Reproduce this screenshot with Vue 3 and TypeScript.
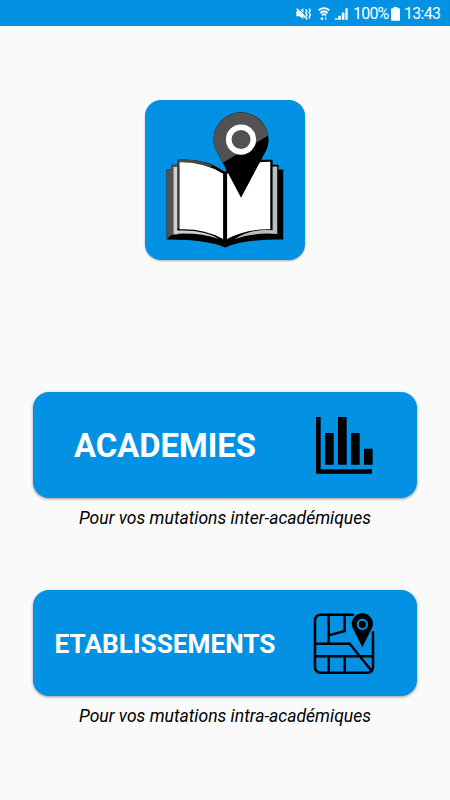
<script setup lang="ts">
type Entry = {
  id: 'chart' | 'map'
  title: string
  caption: string
}

const entries: Entry[] = [
  { id: 'chart', title: 'ACADEMIES', caption: 'Pour vos mutations inter-académiques' },
  { id: 'map', title: 'ETABLISSEMENTS', caption: 'Pour vos mutations intra-académiques' },
]
</script>

<template>
  <div class="screen">
    <header class="status">
      <svg class="mute" viewBox="0 0 45 42" aria-hidden="true">
        <path d="M1 13h9L22 4v32L10 28H1z" fill="#fff" />
        <path d="M5 2L38 35" stroke="#0392e3" stroke-width="3" />
        <path d="M2 5L34 37" stroke="#fff" stroke-width="4.5" />
        <path d="M29 7l4 5-4 6 4 6-4 5M40 5l3 6-4 6 4 7-4 6 3 4" fill="none" stroke="#fff" stroke-width="4" />
      </svg>
      <svg class="wifi" viewBox="0 0 36 42" aria-hidden="true">
        <path d="M2 10Q18-3 34 10M7 18Q18 7 29 18M12 25Q18 18 24 25" fill="none" stroke="#fff" stroke-width="5.5" />
        <path d="M12 30l5 5-5 5-5-5z" fill="#fff" />
        <path d="M23 29v10" stroke="#b5def7" stroke-width="4" />
      </svg>
      <svg class="signal" viewBox="0 0 40 42" aria-hidden="true">
        <path d="M0 34h8v5H0zM10 26h8v13h-8zM21 16h8v23h-8zM32 3h7v36h-7z" fill="#fff" />
      </svg>
      <span class="percent">100%</span>
      <svg class="battery" viewBox="0 0 27 42" aria-hidden="true">
        <path d="M8 0h11v4h6q2 0 2 2v32q0 3-3 3H3q-3 0-3-3V6q0-2 2-2h6z" fill="#fff" />
      </svg>
      <span class="clock">13:43</span>
    </header>

    <main class="content">
      <div class="logo">
        <svg viewBox="28 28 483 483" aria-hidden="true">
          <path d="M93 237h14v-14h18v-15q85-6 143 36h8v227h-9q-60-24-174-23z" fill="#000" />
          <path d="M93 237h14v-14h18v-15q30-2 58 4v16h-56v206h-20L93 448z" fill="#525252" />
          <path d="M114 230h11v190q76-7 125 26-58-20-136-15z" fill="#d0d0d0" />
          <path d="M125 208q55-4 103 15v8q-50-20-103-17z" fill="#484848" />
          <path d="M268 244q50-36 110-36h34v15h18v14h14v211q-114-1-175 23z" fill="#000" />
          <path d="M426 228h-14v192q-67-5-113 26 55-20 127-15z" fill="#bdbdbd" />
          <path d="M129 215V418" stroke="#383838" stroke-width="6" />
          <path d="M126 418q80-4 139 30" fill="none" stroke="#000" stroke-width="6" />
          <path d="M132 215q77-1 131 35v196q-58-32-131-29z" fill="#fff" />
          <path d="M275 250q58-36 130-36v203q-72-2-130 29z" fill="#fff" />
          <path d="M317 322L249 193Q234 171 234 147a83 82 0 0 1 166 0q0 24-15 47z" fill="#000" />
          <path d="M262 217L249 193Q234 171 234 147a83 82 0 0 1 165-12z" fill="#525252" />
          <circle cx="317" cy="147" r="37" fill="#525252" stroke="#fff" stroke-width="17" />
        </svg>
      </div>

      <nav class="menu">
        <section v-for="entry in entries" :key="entry.id" class="entry">
          <button type="button" class="card">
            <span class="title" :class="entry.id">{{ entry.title }}</span>
            <svg v-if="entry.id === 'chart'" class="icon" viewBox="0 0 270 258" aria-hidden="true">
              <path
                d="M48 45h14v157h154v13H48zM75 93h26v95H75zM114 45h26v143h-26zM153 93h26v95h-26zM192 140h26v48h-26z"
                fill="#000"
              />
            </svg>
            <svg v-else class="icon" viewBox="0 0 270 258" aria-hidden="true">
              <g fill="none" stroke="#000" stroke-width="7.5">
                <path d="M162 44H63Q45 44 45 62V200q0 18 18 18H201q18 0 18-18V94" />
                <path d="M86 44V130M134 44V93L86 106M45 131H149L215 213M45 169H179M86 169v49M134 169v49M180 169h39" />
              </g>
              <path
                fill-rule="evenodd"
                d="M187 142L163 94Q155 82 155 72a32 32 0 0 1 64 0q0 10-8 22zM187 56a17 17 0 1 0 .1 0z"
                fill="#000"
              />
              <circle cx="187" cy="73" r="11" fill="#000" />
            </svg>
          </button>
          <p class="caption">{{ entry.caption }}</p>
        </section>
      </nav>
    </main>
  </div>
</template>

<style>
body {
  margin: 0;
  background: #fafafa;
}
</style>

<style scoped>
.screen {
  width: 450px;
  height: 800px;
  overflow: hidden;
  background: #fafafa;
  color: #000;
  font-family: Roboto, "Liberation Sans", sans-serif;
}

.status {
  display: flex;
  align-items: center;
  justify-content: flex-end;
  box-sizing: border-box;
  height: 26px;
  padding: 2px 9px 0 0;
  background: #0392e3;
  color: #fff;
  font-size: 16px;
  line-height: 24px;
}

.status svg {
  display: block;
  height: 14px;
}

.mute {
  width: 15px;
  margin-right: 7px;
}

.wifi {
  width: 12px;
  margin-right: 5px;
}

.signal {
  width: 13px;
  margin-right: 5px;
}

.percent {
  width: 34px;
  white-space: nowrap;
  letter-spacing: -0.8px;
}

.battery {
  width: 9px;
  margin: 0 4px;
}

.clock {
  width: 37px;
  white-space: nowrap;
  letter-spacing: -0.7px;
}

.content {
  display: flex;
  flex-direction: column;
  align-items: center;
  padding-top: 73.5px;
}

.logo {
  width: 160.5px;
  height: 160.5px;
  margin-right: 0.5px;
  border-radius: 16px;
  background: #0392e3;
  box-shadow: 0 1px 2px rgba(0, 0, 0, 0.3);
}

.logo svg {
  display: block;
  width: 100%;
  height: 100%;
}

.menu {
  display: flex;
  flex-direction: column;
  gap: 62px;
  margin-top: 132px;
}

.entry {
  width: 384px;
  height: 136px;
}

.card {
  display: flex;
  align-items: center;
  width: 384px;
  height: 106px;
  padding: 0;
  border: 0;
  border-radius: 16px;
  background: #0392e3;
  box-shadow: 0 1px 3px rgba(0, 0, 0, 0.4);
  color: #fff;
  font-family: inherit;
}

.title {
  width: 264px;
  padding-top: 1px;
  text-align: center;
  font-weight: 700;
  white-space: nowrap;
}

.title.chart {
  font-size: 32.8px;
}

.title.map {
  font-size: 26.2px;
}

.icon {
  width: 90px;
  height: 86px;
  margin-left: 3px;
}

.caption {
  margin: 9px 0 0;
  text-align: center;
  font-size: 17.55px;
  font-style: italic;
  line-height: 22px;
  white-space: nowrap;
}
</style>
